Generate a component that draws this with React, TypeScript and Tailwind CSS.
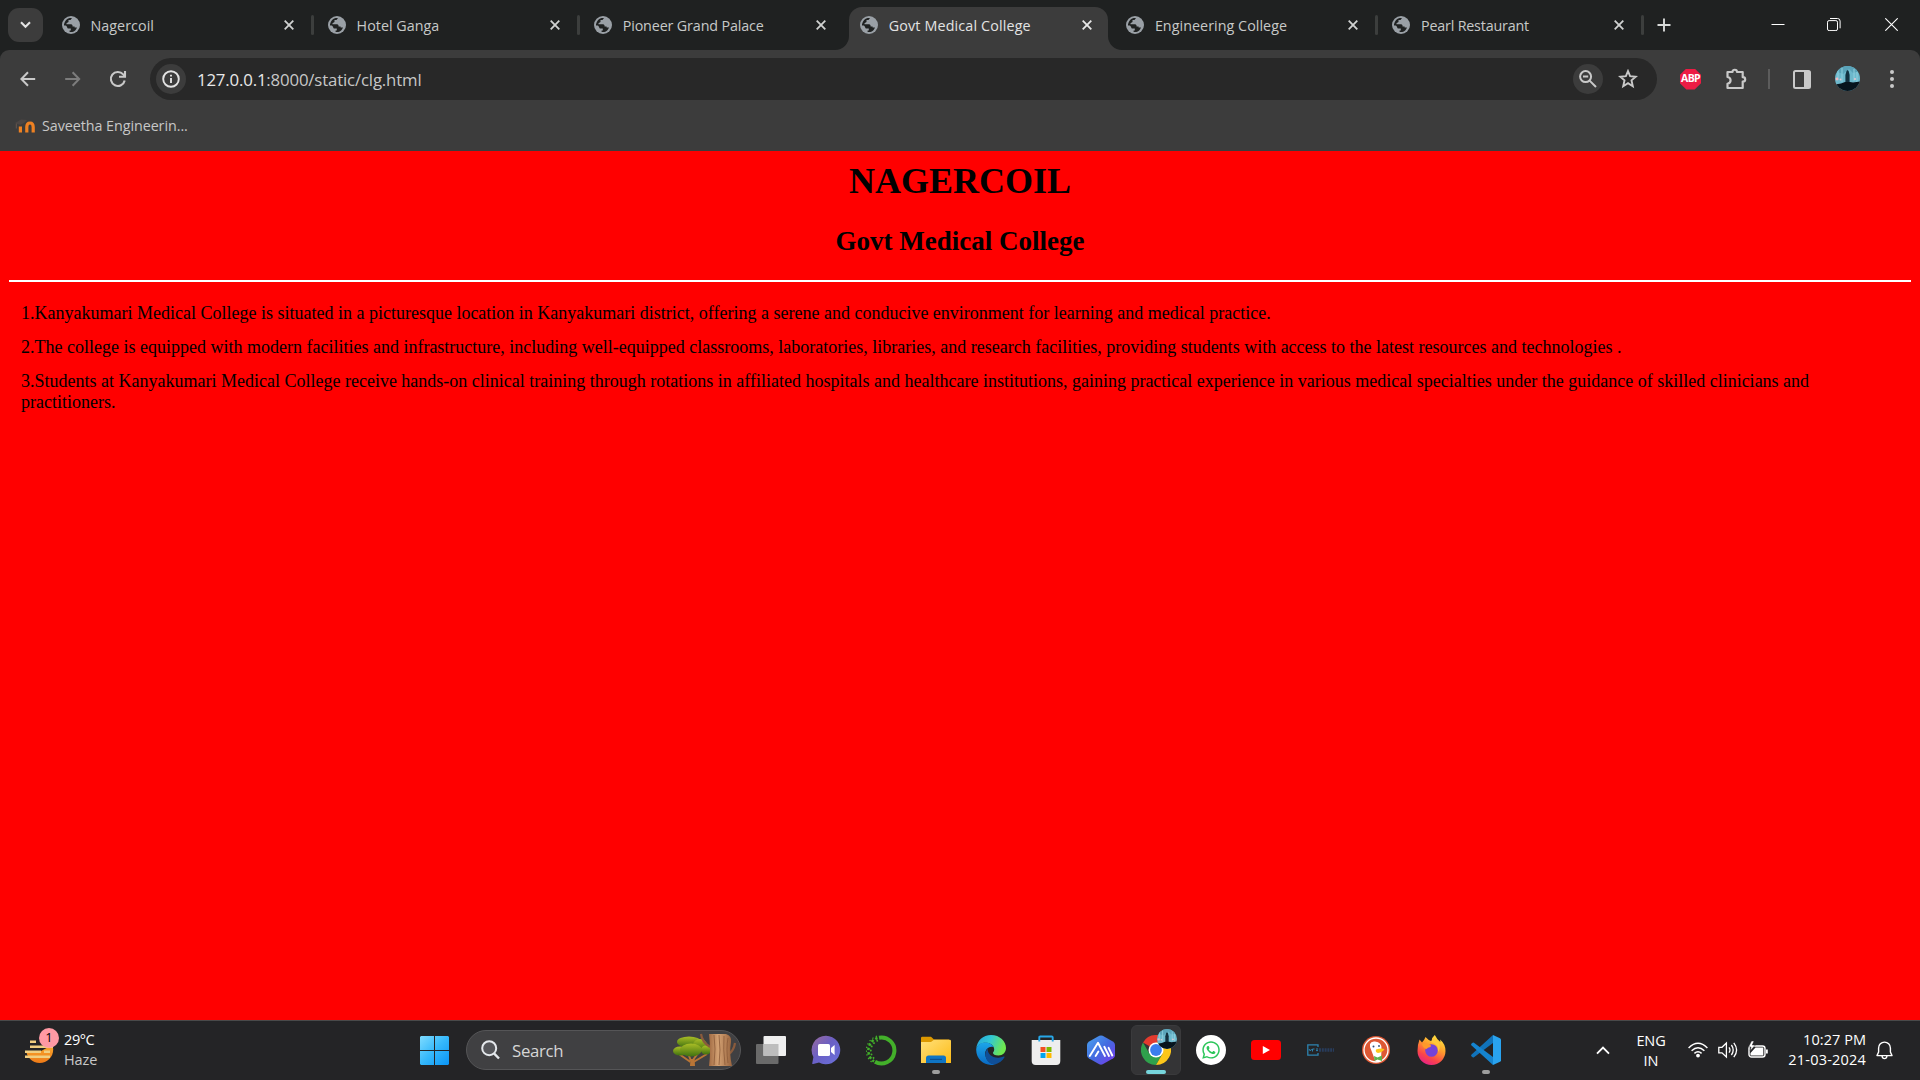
import type { ReactNode } from 'react';
import { FaWhatsapp } from 'react-icons/fa';

const UI = "font-['Open_Sans','Noto_Sans',sans-serif]";

function Globe() {
  return (
    <svg width="18" height="18" viewBox="0 0 18 18" className="shrink-0">
      <circle cx="9" cy="9" r="9" fill="#9aa0a6" />
      <path d="M2 8.2 C2.8 5 4.8 2.6 7.6 2 L10 1.9 L8.5 4 H6.5 V6 L4.5 7.2 V8.2 H9 C10.4 8.2 10.6 9.2 10.6 10.4 H12.6 V11.4 H15 C14.3 13.6 12.4 15.4 10.4 15.9 L7.6 16.1 V14.5 H8.8 V12.6 H6.4 C5 12.6 5.4 9.9 3.6 9.4 H2 Z" fill="#1f2121" />
      <path d="M10.3 2.1 C13.2 2.7 15.5 5 15.9 8.2 C14.6 9.5 12.4 9.2 12 7.6 C9.8 7.8 8.2 6.8 8.6 5 L10.6 4.6 Z" fill="#9aa0a6" />
    </svg>
  );
}

function CloseX({ color = '#d0d2d1' }: { color?: string }) {
  return (
    <svg width="10" height="10" viewBox="0 0 10 10" className="shrink-0">
      <path d="M.7 .7 L9.3 9.3 M9.3 .7 L.7 9.3" stroke={color} strokeWidth="1.8" />
    </svg>
  );
}

const tabs = [
  { title: 'Nagercoil', divider: true, tracking: 'tracking-[0.05px]' },
  { title: 'Hotel Ganga', divider: true, tracking: 'tracking-[0.02px]' },
  { title: 'Pioneer Grand Palace', divider: false, tracking: 'tracking-[-0.13px]' },
  { title: 'Govt Medical College', divider: false, active: true, tracking: 'tracking-[0.15px]' },
  { title: 'Engineering College', divider: true, tracking: 'tracking-[0.05px]' },
  { title: 'Pearl Restaurant', divider: true, tracking: 'tracking-[-0.18px]' },
];

function Tab({ title, divider, active, tracking }: { title: string; divider: boolean; active?: boolean; tracking: string }) {
  return (
    <div className="relative flex h-[50px] w-[266.1px] shrink-0 items-end">
      {active && (
        <>
          <svg className="absolute bottom-0 -left-[14px]" width="14" height="14"><path d="M14 0 V14 H0 A14 14 0 0 0 14 0Z" fill="#3c3c3c" /></svg>
          <svg className="absolute bottom-0 left-[259px]" width="14" height="14"><path d="M0 0 V14 H14 A14 14 0 0 1 0 0Z" fill="#3c3c3c" /></svg>
        </>
      )}
      <div className={active ? 'flex h-[43px] w-[259px] items-center rounded-t-[13px] bg-[#3c3c3c] pb-[7px] pl-[10.5px] text-[#e3e3e3]' : 'flex h-[43px] w-[259px] items-center pb-[7px] pl-[10.5px] text-[#c7c9c8]'}>
        <Globe />
        <span className={'mt-[2px] ml-[11px] w-[193.5px] text-[14.3px] whitespace-nowrap ' + tracking}>{title}</span>
        <CloseX color={active ? '#e8e8e8' : '#d0d2d1'} />
      </div>
      {divider && <div className="mb-[15px] ml-px h-5 w-[3px] rounded-full bg-[#3c3e3d]" />}
    </div>
  );
}

function Avatar({ size }: { size: number }) {
  return (
    <svg width={size} height={size} viewBox="0 0 25 25">
      <defs><clipPath id={'av' + size}><circle cx="12.5" cy="12.5" r="12.5" /></clipPath></defs>
      <g clipPath={'url(#av' + size + ')'}>
        <rect width="25" height="25" fill="#6db8cc" />
        <path d="M0 0 H25 V5 L18 7 L14 3 L8 8 L0 5Z" fill="#5aa3b9" />
        <path d="M3 4 V14 M7 2 V16 M19 3 V15 M22 6 V16" stroke="#8fd0de" strokeWidth="1" />
        <circle cx="2" cy="13" r="1.4" fill="#f0b8c0" /><circle cx="5.5" cy="13.5" r="1" fill="#e7c6d0" /><circle cx="20" cy="13" r="1" fill="#e7c6d0" />
        <path d="M10.4 18 V9 L11.5 5 L12.5 4 L13.6 5 L14.6 9 V18Z" fill="#12303f" />
        <path d="M0 18.5 L6 17.5 L10 16 H15 L18 16.5 L25 15.5 V25 H0Z" fill="#07141d" />
      </g>
    </svg>
  );
}

function TabStrip() {
  return (
    <div className="flex h-[50px] bg-[#1f2121]">
      <div className="mt-2 ml-2 flex h-[34px] w-[35px] shrink-0 items-center justify-center rounded-[11px] bg-[#3c3c3c]">
        <svg width="11" height="8" viewBox="0 0 11 8"><path d="M1 1.3 L5.5 5.8 L10 1.3" fill="none" stroke="#e3e3e3" strokeWidth="2.1" /></svg>
      </div>
      <div className="ml-2 flex">{tabs.map((t) => <Tab key={t.title} {...t} />)}</div>
      <svg className="mt-[18px] ml-[9.4px]" width="14" height="14" viewBox="0 0 14 14"><path d="M7 .5 V13.5 M.5 7 H13.5" stroke="#d8dad9" strokeWidth="1.9" /></svg>
      <div className="mr-[22px] ml-auto flex pt-[18px]">
        <svg width="14" height="13"><path d="M.5 6.5 H13.5" stroke="#fff" /></svg>
        <svg className="ml-[42px]" width="14" height="13" fill="none" stroke="#fff"><rect x=".5" y="2.6" width="10" height="10" rx="1.6" /><path d="M3 .5 H10.5 A2.6 2.6 0 0 1 13.1 3.1 V10.3" /></svg>
        <svg className="ml-[44px]" width="13" height="13"><path d="M.3 .3 L12.7 12.7 M12.7 .3 L.3 12.7" stroke="#fff" strokeWidth="1.1" /></svg>
      </div>
    </div>
  );
}

function Toolbar() {
  return (
    <div className="bg-[#1f2121]">
      <div className="h-[101px] rounded-t-[9px] bg-[#3c3c3c] pt-2">
        <div className="flex h-[42px] items-center">
          <svg className="ml-5 shrink-0" width="16" height="16" viewBox="0 0 16 16" fill="none" stroke="#c9c9c9" strokeWidth="2"><path d="M15.2 8 H1.6 M8 1.2 L1.4 8 L8 14.8" /></svg>
          <svg className="ml-[29px] shrink-0" width="16" height="16" viewBox="0 0 16 16" fill="none" stroke="#7c7c7c" strokeWidth="2"><path d="M.2 8 H14 M7.6 1.2 L14.2 8 L7.6 14.8" /></svg>
          <svg className="ml-[28px] shrink-0" width="18" height="18" viewBox="0 0 18 18" fill="none" stroke="#c9c9c9" strokeWidth="2.1"><path d="M15.7 10.5 A7 7 0 1 1 14.2 4.4 L15.6 6" /><path d="M16 1 V6.8 H10" /></svg>
          <div className="ml-[23px] flex h-[42px] w-[1507px] shrink-0 items-center rounded-full bg-[#282828] pl-[6px]">
            <div className="flex h-[30px] w-[30px] items-center justify-center rounded-full bg-[#3c3c3c]">
              <svg width="18" height="18" viewBox="0 0 18 18"><circle cx="9" cy="9" r="7.8" fill="none" stroke="#e3e3e3" strokeWidth="1.9" /><path d="M9 8 V13 M9 4.8 V6.6" stroke="#e3e3e3" strokeWidth="1.9" /></svg>
            </div>
            <span className="mt-[2px] ml-[11px] text-[16.8px] tracking-[-0.16px] whitespace-nowrap text-[#c7c7c7]"><span className="text-[#e8e8e8]">127.0.0.1</span>:8000/static/clg.html</span>
            <div className="mr-[19.5px] ml-auto flex items-center gap-[15px]">
              <div className="flex h-[30px] w-[30px] items-center justify-center rounded-full bg-[#3c3c3c]">
                <svg width="18" height="18" viewBox="0 0 18 18" fill="none" stroke="#c9c9c9" strokeWidth="2"><circle cx="6.6" cy="6.6" r="5.5" /><path d="M10.6 10.6 L17 17 M4 6.6 H9.2" /></svg>
              </div>
              <svg width="20" height="20" viewBox="0 0 20 20" fill="none" stroke="#c9c9c9" strokeWidth="1.9"><path d="M10 2.1 L12.1 7.2 L17.8 7.7 L13.5 11.4 L14.8 17.2 L10 14.2 L5.2 17.2 L6.5 11.4 L2.2 7.7 L7.9 7.2 Z" /></svg>
            </div>
          </div>
          <div className="ml-[23px] flex shrink-0 items-center">
            <div className="flex h-[21px] w-[21px] items-center justify-center bg-[#ed1c44] text-[10.5px] font-bold tracking-[-0.7px] text-white [clip-path:polygon(30%_0,70%_0,100%_30%,100%_70%,70%_100%,30%_100%,0_70%,0_30%)]">ABP</div>
            <svg className="ml-6" width="22" height="22" viewBox="0 0 22 22" fill="none" stroke="#c9c9c9" strokeWidth="2.2" strokeLinejoin="round"><path d="M2.5 4 H7.5 C7.5 1 12 1 12 4 H17.7 V9.2 C21 9.2 21 13.6 17.7 13.6 V20 H2.5 V15.8 C6.6 15 6.6 9.6 2.5 9 Z" /></svg>
            <div className="ml-[21px] h-5 w-[2px] bg-[#5c5c5c]" />
            <svg className="ml-[23px]" width="18" height="19" viewBox="0 0 18 19"><rect x="1" y="1" width="16" height="17" rx="1.5" fill="none" stroke="#c9c9c9" strokeWidth="2" /><path d="M11 1 H17 V18 H11Z" fill="#c9c9c9" /></svg>
            <div className="mb-[2px] ml-6"><Avatar size={25} /></div>
            <svg className="ml-[30px]" width="4" height="18" fill="#c9c9c9"><circle cx="2" cy="2" r="2" /><circle cx="2" cy="9" r="2" /><circle cx="2" cy="16" r="2" /></svg>
          </div>
        </div>
        <div className="flex h-[51px] items-center pl-[15px]">
          <svg width="20" height="14" viewBox="0 0 20 14"><path d="M5.4 13.5 V7.5 M11.8 13.5 V7.5 M11.8 13.5 V8 Q11.8 4 15 4 Q18.2 4 18.2 8 V13.5" fill="none" stroke="#ee8122" strokeWidth="3.2" /><path d="M0 4 L6 .6 L12 1 L9 4 L5.5 5.8 L2.5 5Z" fill="#4c4644" /><path d="M1.3 4.5 V9.5" stroke="#67564d" /></svg>
          <span className="ml-[7px] text-[14.3px] tracking-[-0.05px] text-[#c7c7c7]">Saveetha Engineerin...</span>
        </div>
      </div>
    </div>
  );
}

function PageBody() {
  return (
    <main className="h-[869px] bg-[#ff0000] px-[9px] pt-[10px] font-['Liberation_Serif',serif] text-black">
      <h1 className="text-center text-[36px] leading-[41px] font-bold">NAGERCOIL</h1>
      <h2 className="mt-[24px] text-center text-[27px] leading-[31px] font-bold">Govt Medical College</h2>
      <div className="mt-[23px] h-[2px] bg-white" />
      <div className="px-[12px] pt-[21px] text-[18px] leading-[21px]">
        <p>1.Kanyakumari Medical College is situated in a picturesque location in Kanyakumari district, offering a serene and conducive environment for learning and medical practice.</p>
        <p className="mt-[13px]">2.The college is equipped with modern facilities and infrastructure, including well-equipped classrooms, laboratories, libraries, and research facilities, providing students with access to the latest resources and technologies .</p>
        <p className="mt-[13px]">3.Students at Kanyakumari Medical College receive hands-on clinical training through rotations in affiliated hospitals and healthcare institutions, gaining practical experience in various medical specialties under the guidance of skilled clinicians and practitioners.</p>
      </div>
    </main>
  );
}

function Slot({ children, indicator, active }: { children: ReactNode; indicator?: boolean; active?: boolean }) {
  return (
    <div className="relative flex h-[59px] w-[55px] shrink-0 items-center justify-center">
      {active && <div className="absolute top-[4px] left-[2.5px] h-[50px] w-[50px] rounded-[6px] border border-[#3a3a3c] bg-[#343436]" />}
      <div className="relative mb-[1px]">{children}</div>
      {indicator && <div className={active ? 'absolute top-[49px] h-1 w-5 rounded-full bg-[#76d5dc]' : 'absolute top-[49px] h-1 w-2 rounded-full bg-[#9d9d9d]'} />}
    </div>
  );
}

function Trees() {
  return (
    <svg width="64" height="34" viewBox="0 0 64 34">
      <defs>
        <linearGradient id="leaf" x1="0" y1="0" x2="0" y2="1"><stop offset="0" stopColor="#a9bd25" /><stop offset="1" stopColor="#3f7110" /></linearGradient>
        <linearGradient id="bark"><stop offset="0" stopColor="#a26b43" /><stop offset=".4" stopColor="#d3a173" /><stop offset="1" stopColor="#99643e" /></linearGradient>
      </defs>
      <path d="M17.5 29 L6 21 M18 28 L15 20 M20.5 29 L34 21 M20 27 L25 20" stroke="#b97536" strokeWidth="2" fill="none" />
      <path d="M17 33 L17.5 26 H21.5 L22 33Z" fill="#b97536" />
      <g fill="url(#leaf)"><ellipse cx="16" cy="9" rx="12" ry="5.5" /><ellipse cx="7" cy="18" rx="7" ry="4.5" /><ellipse cx="27" cy="12" rx="7" ry="6" /><ellipse cx="18" cy="17" rx="11" ry="6.5" /><ellipse cx="33" cy="17" rx="5" ry="4.5" /></g>
      <path d="M28 1 Q29 9 37 14" stroke="#8a5b3c" strokeWidth="2.2" fill="none" />
      <path d="M62 10 Q61 17 56 21" stroke="#8a5b3c" strokeWidth="2.2" fill="none" />
      <path d="M36 1 H53 Q59 3 58 9 Q56 20 59 33 H36 Q38 18 36 1Z" fill="url(#bark)" />
      <path d="M41 2 Q43 15 41 32 M46 2 Q48 17 46 32 M51 3 Q50 16 52 32 M55 5 Q53 15 55 30" stroke="#8c5a38" strokeWidth=".8" fill="none" />
    </svg>
  );
}

function Chat() {
  return (
    <svg width="30" height="30" viewBox="0 0 30 30">
      <defs><linearGradient id="chat" x1="0" y1="0" x2="1" y2="1"><stop offset="0" stopColor="#9c6a9c" /><stop offset=".45" stopColor="#6a5fc4" /><stop offset="1" stopColor="#6b72dd" /></linearGradient></defs>
      <path d="M15 .7 A14.3 14.3 0 1 1 8 27.5 L2.2 29 Q1 29.2 1.3 28 L2.4 22 A14.3 14.3 0 0 1 15 .7Z" fill="url(#chat)" />
      <rect x="7" y="9" width="12" height="12" rx="1.6" fill="#fff" /><path d="M20 13 L23.6 10 V20 L20 17Z" fill="#fff" />
    </svg>
  );
}

function Anaconda() {
  return (
    <svg width="31" height="31" viewBox="0 0 31 31" fill="none" stroke="#43b02a">
      <path d="M13 2.7 A13 13 0 1 1 9 26.8" strokeWidth="4" />
      <path d="M11.5 3 A13.3 13.3 0 0 0 8 26.5" strokeWidth="2.5" strokeDasharray="2.5 2" />
      <path d="M12 5.5 A11 11 0 0 0 8.5 24" strokeWidth="1.7" strokeDasharray="1.7 2.3" />
      <path d="M11 1.2 A15 15 0 0 0 7 28" strokeWidth="1.3" strokeDasharray="1.4 2.4" />
    </svg>
  );
}

function Explorer() {
  return (
    <svg width="30" height="28" viewBox="0 0 30 28">
      <defs><linearGradient id="fold" x1="0" y1="0" x2="1" y2="1"><stop offset="0" stopColor="#ffe07a" /><stop offset="1" stopColor="#fdbb16" /></linearGradient></defs>
      <path d="M0 2 Q0 .8 1.3 .8 H10 L13 3.4 H28 V10 H0Z" fill="#dc9800" />
      <path d="M0 6 H10 L13 3.7 H28.7 Q30 3.7 30 5 V27 H0Z" fill="url(#fold)" />
      <path d="M5 27 V22 Q5 19.5 7.5 19.5 H22.5 Q25 19.5 25 22 V27Z" fill="#0f75c4" /><path d="M9 23.4 H21" stroke="#0b4f91" strokeWidth="1.2" />
    </svg>
  );
}

function Edge() {
  return (
    <svg width="30" height="30" viewBox="0 0 30 30">
      <defs>
        <linearGradient id="e1" x1="0" y1="0" x2="1" y2=".3"><stop offset="0" stopColor="#24a3dd" /><stop offset=".5" stopColor="#32c7d3" /><stop offset="1" stopColor="#6ee850" /></linearGradient>
        <linearGradient id="e2" x1="0" y1="0" x2="0" y2="1"><stop offset="0" stopColor="#1ca6ea" /><stop offset="1" stopColor="#0969c3" /></linearGradient>
      </defs>
      <path d="M.2 14 C1 5.5 7 0 15 0 C24 0 30 6.5 30 13 C30 17.5 26.7 20.5 22.5 20.5 C18.7 20.5 17 19 17 18 C17 17 18.2 16.8 18.2 14.3 C18.2 10.5 14 7.8 9.5 7.8 C5 7.8 1.3 10 .2 14Z" fill="url(#e1)" />
      <path d="M.2 14.5 C.6 10.3 4.6 7.5 9 7.5 C13 7.5 16.5 9.3 17.7 12 C13 10.5 8.8 14.5 9.2 19 C9.6 24.5 13.5 28.5 19 29.4 C10 32 0 25.5 .2 14.5Z" fill="url(#e2)" />
      <path d="M11.7 13.5 C9.5 16 8.5 19.5 10 23 C11.6 27 15 29.6 19 29.4 C23.2 28.2 26.5 25.7 28.5 22.3 C28.8 21.6 28.4 21.3 27.8 21.6 C25.8 22.5 24 22.8 22 22.7 C15.5 22.5 11.3 18.5 11.7 13.5Z" fill="#0f4f98" />
    </svg>
  );
}

function Store() {
  return (
    <svg width="30" height="30" viewBox="0 0 30 30">
      <path d="M.7 5 H29.3 V26 Q29.3 30 25.3 30 H4.7 Q.7 30 .7 26Z" fill="#eeeeee" />
      <path d="M8.3 6.5 V2.5 Q8.3 1.5 9.3 1.5 H20.7 Q21.7 1.5 21.7 2.5 V6.5" fill="none" stroke="#27a7e8" strokeWidth="1.9" />
      <rect x="9.5" y="12" width="5" height="5" fill="#f25022" /><rect x="15.5" y="12" width="5" height="5" fill="#7fba00" /><rect x="9.5" y="18" width="5" height="5" fill="#00a4ef" /><rect x="15.5" y="18" width="5" height="5" fill="#ffb900" />
    </svg>
  );
}

function HexAi() {
  return (
    <svg width="30" height="30" viewBox="0 0 30 30" fill="none">
      <defs><linearGradient id="hex" x1="0" y1="0" x2="1" y2="1"><stop offset="0" stopColor="#4aa5f0" /><stop offset=".5" stopColor="#436be0" /><stop offset="1" stopColor="#7a35ee" /></linearGradient></defs>
      <path d="M13.3 .8 Q15 0 16.7 .8 L27.3 6.8 Q29 8 29 10 V20.5 Q29 22.3 27.3 23.3 L16.7 29.3 Q15 30.1 13.3 29.3 L2.7 23.3 Q1 22.3 1 20.5 V10 Q1 8 2.7 6.8Z" fill="url(#hex)" />
      <path d="M3.8 21 L12 7.8 L19 21 M9.6 21 L12.4 16.5 M18.3 11.8 L23 21 M22.6 12.8 L26.3 20.5" stroke="#fff" strokeWidth="1.9" strokeLinecap="round" strokeLinejoin="round" />
    </svg>
  );
}

function Chrome() {
  return (
    <svg width="30" height="30" viewBox="0 0 30 30">
      <path d="M15 15 L2 7.5 A15 15 0 0 1 28 7.5 H15Z" fill="#e33b2e" />
      <path d="M2 7.5 A15 15 0 0 0 15 30 L21.5 18.7 L15 15 L8.5 18.8Z" fill="#2fa14c" />
      <path d="M28 7.5 A15 15 0 0 1 15 30 L21.5 18.7 L15 7.5Z" fill="#fcc61a" />
      <circle cx="15" cy="15" r="7.5" fill="#fff" /><circle cx="15" cy="15" r="5.9" fill="#3b7ded" />
    </svg>
  );
}

function Duck() {
  return (
    <svg width="28" height="28" viewBox="0 0 28 28">
      <circle cx="14" cy="14" r="14" fill="#de5833" /><circle cx="14" cy="14" r="12" fill="none" stroke="#fff" strokeWidth="1.3" />
      <path d="M8 8 Q9 5 13 5.5 Q20 6 19.5 13 L19 25 Q16 26 13.5 25.5 Q10 16 8 11Z" fill="#fff" />
      <path d="M14 13.5 Q19 12 22.5 13 Q21 16 16 17 Q13 16 14 13.5Z" fill="#fcc61a" /><circle cx="11.5" cy="10.5" r="1" fill="#2c4f78" /><circle cx="17" cy="10" r=".9" fill="#2c4f78" />
      <path d="M12 20 L15.5 21.5 L20 19.5 V25 L15.5 23.5 L12.5 25Z" fill="#5fb24a" />
    </svg>
  );
}

function Firefox() {
  return (
    <svg width="29" height="30" viewBox="0 0 29 30">
      <defs><linearGradient id="ff" x1=".8" y1="0" x2=".3" y2="1"><stop offset="0" stopColor="#fff044" /><stop offset=".4" stopColor="#ffa02c" /><stop offset=".75" stopColor="#fb4549" /><stop offset="1" stopColor="#e52088" /></linearGradient></defs>
      <path d="M2.5 4.5 L5 7.5 Q7 5.8 8.5 2 Q11 5 14.5 6.2 Q15 2 17.8 0 Q20 4.5 23.3 7 Q23.5 5.8 23 4.5 Q28.5 9 28.5 16 A14 14 0 0 1 .5 16 Q.5 9.5 2.5 4.5Z" fill="url(#ff)" />
      <circle cx="14.5" cy="15.5" r="6.3" fill="#7542d8" />
      <path d="M5 9 Q10 7 14 10.5 L13.5 12 Q10.5 12.5 9.5 14 Q6 13.5 5 9Z" fill="#ff9a2a" />
      <path d="M14 7 Q22 9 21 17 Q24 13 22 8 L16 3Z" fill="#ffc83a" />
    </svg>
  );
}

function VsCode() {
  return (
    <svg width="30" height="30" viewBox="0 0 30 30">
      <path d="M22 0 L22 8 L3 22.2 Q2 22.8 1.2 22 L.4 21.2 Q-.3 20.2 .6 19.4Z" fill="#1173ba" />
      <path d="M22 30 L22 22 L3 7.8 Q2 7.2 1.2 8 L.4 8.8 Q-.3 9.8 .6 10.6Z" fill="#1584cf" />
      <path d="M22 0 L29 3.2 Q30 3.7 30 4.8 V25.2 Q30 26.3 29 26.8 L22 30 Z" fill="#29a3ef" />
    </svg>
  );
}

function Taskbar() {
  return (
    <footer className="flex h-[60px] border-t border-[#4a4a4a] bg-[#242426] text-white">
      <div className="relative flex w-[407px] shrink-0 pl-[25px]">
        <svg className="mt-[10px]" width="31" height="38" viewBox="0 0 31 38">
          <defs><linearGradient id="sun" x1="0" y1="0" x2="0" y2="1"><stop offset="0" stopColor="#ffc13a" /><stop offset="1" stopColor="#ee7a17" /></linearGradient></defs>
          <circle cx="14.7" cy="18.5" r="13.5" fill="url(#sun)" />
          <path d="M0 4 H31 V12 L16 20 H0Z" fill="#242426" />
          <path d="M5 10.8 H11 M5 15.8 H28 M0 20.8 H16 M19 20.8 H25 M0 25.8 H25" stroke="#f0ce80" strokeWidth="2.4" />
        </svg>
        <div className="absolute top-[7px] left-[39px] flex h-5 w-5 items-center justify-center rounded-full bg-[#ff99a4] text-[13px] text-black">1</div>
        <div className="mt-[9px] ml-2 text-[14.5px] leading-5 tracking-[-0.4px]">
          <div>29°C</div>
          <div className="tracking-[-0.1px] text-[#c8c8c8]">Haze</div>
        </div>
      </div>
      <Slot>
        <svg width="29" height="29" viewBox="0 0 29 29">
          <defs><linearGradient id="win" x1="0" y1="0" x2="1" y2="1"><stop offset="0" stopColor="#7fdcff" /><stop offset=".5" stopColor="#35b8fb" /><stop offset="1" stopColor="#0a94f5" /></linearGradient></defs>
          <path d="M1 0 H14 V14 H0 V1Z M15 0 H28 L29 1 V14 H15Z M0 15 H14 V29 H1 L0 28Z M15 15 H29 V28 L28 29 H15Z" fill="url(#win)" />
        </svg>
      </Slot>
      <div className="mt-[9px] ml-1 flex h-10 w-[275px] shrink-0 items-center rounded-full border border-[#555557] bg-[#404042] pr-[3px] pl-[14px]">
        <svg width="19" height="20" viewBox="0 0 19 20" fill="#55565a" stroke="#e4e8ec" strokeWidth="2"><circle cx="8.2" cy="8.2" r="7" /><path d="M13 13.3 L18 18.5" strokeWidth="2.4" /></svg>
        <span className="mt-[2px] ml-3 text-[16.8px] tracking-[-0.3px] text-[#d6d6d6]">Search</span>
        <div className="ml-auto"><Trees /></div>
      </div>
      <div className="ml-[2.5px] flex shrink-0">
        <Slot>
          <svg width="30" height="28" viewBox="0 0 30 28"><rect x="0" y="8" width="22.5" height="20" rx="1" fill="#6a6a6a" /><rect x="7.5" y="0" width="22.5" height="20" rx="1" fill="#efefef" /><rect x="7.5" y="8" width="15" height="12" fill="#bdbdbd" /></svg>
        </Slot>
        <Slot><Chat /></Slot>
        <Slot><Anaconda /></Slot>
        <Slot indicator><Explorer /></Slot>
        <Slot><Edge /></Slot>
        <Slot><Store /></Slot>
        <Slot><HexAi /></Slot>
        <Slot indicator active>
          <Chrome />
          <div className="absolute -top-[6px] left-[16px]"><Avatar size={20} /></div>
        </Slot>
        <Slot><div className="flex h-[30px] w-[30px] items-center justify-center rounded-full bg-white"><FaWhatsapp size={20} color="#2cc65a" /></div></Slot>
        <Slot><svg width="30" height="20" viewBox="0 0 30 20"><rect width="30" height="20" rx="3.5" fill="#f00" /><path d="M11.8 6 L19 10 L11.8 14Z" fill="#fff" /></svg></Slot>
        <Slot>
          <svg width="28" height="12" viewBox="0 0 28 12" fill="none"><path d="M11 3 V.8 H.8 V11.2 H11 V9" stroke="#2d83b0" strokeWidth="1.3" /><path d="M2 5 L3.3 7 L4.6 5 M5.5 7.5 V5 H7.5 M9 5 H11 M9 6.6 H11" stroke="#2d83b0" /><path d="M12 6 H27" stroke="#283c5c" strokeWidth="3.6" strokeDasharray="2 .8" /></svg>
        </Slot>
        <Slot><Duck /></Slot>
        <Slot><Firefox /></Slot>
        <Slot indicator><VsCode /></Slot>
      </div>
      <div className="mr-[27px] ml-auto flex items-center pb-px text-[14.5px] leading-5 tracking-[-0.35px]">
        <svg width="14" height="9" viewBox="0 0 14 9" fill="none" stroke="#fff" strokeWidth="1.9"><path d="M1 7.7 L7 1.7 L13 7.7" /></svg>
        <div className="ml-[26px] w-[30px] pt-px text-center tracking-[-0.1px]"><div>ENG</div><div>IN</div></div>
        <svg className="ml-[22px]" width="20" height="16" viewBox="0 0 20 16" fill="none" stroke="#fff" strokeWidth="1.5"><path d="M.6 6 Q10 -3.4 19.4 6 M3.6 8.8 Q10 2.6 16.4 8.8 M6.4 11.4 Q10 8 13.6 11.4" /><circle cx="10" cy="13.6" r="1.9" fill="#fff" stroke="none" /></svg>
        <svg className="ml-[10px]" width="20" height="18" viewBox="0 0 20 18" fill="none" stroke="#fff" strokeWidth="1.3"><path d="M.8 6.3 H4 L8.4 2 V16 L4 11.8 H.8Z" /><path d="M11 6.3 Q13 9 11 11.7 M13.4 4 Q17 9 13.4 14 M15.8 1.8 Q21.4 9 15.8 16.2" /></svg>
        <svg className="ml-[10px]" width="20" height="18" viewBox="0 0 20 18"><rect x="1" y="5" width="16" height="11" rx="2.5" fill="none" stroke="#fff" strokeWidth="1.4" /><path d="M7.5 6.5 H15.3 V14.5 H2.5 V12 Z M18 8.5 H19.8 V12.5 H18Z" fill="#fff" /><path d="M3.5 0 L.5 6 H3 L2.2 10 L7.3 4 H4.3 L6 0Z" fill="#fff" stroke="#242426" strokeWidth=".5" /></svg>
        <div className="ml-[19px] w-[79px] text-right whitespace-nowrap"><div className="tracking-[0.05px]">10:27 PM</div><div className="tracking-[0.2px]">21-03-2024</div></div>
        <svg className="ml-[10px]" width="17" height="19" viewBox="0 0 17 19" fill="none" stroke="#fff" strokeWidth="1.4"><path d="M1 14.6 L2.6 11 V7 A5.9 5.9 0 0 1 14.4 7 V11 L16 14.6Z M6 15 Q6.4 17.6 8.5 17.6 Q10.6 17.6 11 15" strokeLinejoin="round" /></svg>
      </div>
    </footer>
  );
}

export default function App() {
  return (
    <div className={`h-[1080px] w-[1920px] overflow-hidden ${UI}`}>
      <TabStrip />
      <Toolbar />
      <PageBody />
      <Taskbar />
    </div>
  );
}
